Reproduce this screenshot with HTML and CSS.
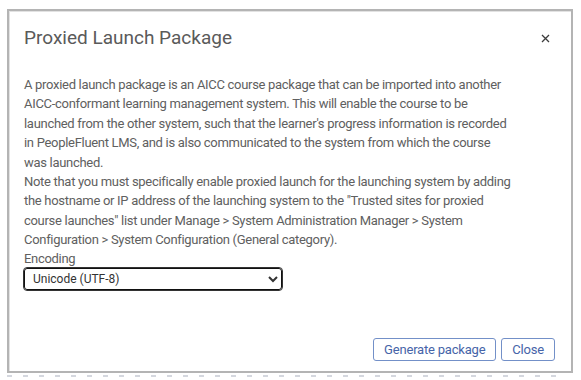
FILE: index.html
```html
<!DOCTYPE html>
<html lang="en">
<head>
    <meta charset="UTF-8">
    <meta name="viewport" content="width=device-width, initial-scale=1.0">
    <title>Proxied Launch Package</title>
    <link rel="stylesheet" href="styles.css">
</head>
<body>
    <div class="modal">
        <div class="modal-header">
            <h1>Proxied Launch Package</h1>
            <button class="close-x" aria-label="Close">
                <svg width="9" height="9" viewBox="0 0 9 9">
                    <path d="M1 1 L8 8 M8 1 L1 8" stroke="#3c3c3c" stroke-width="1.3" fill="none"/>
                </svg>
            </button>
        </div>

        <div class="modal-body">
            <p>A proxied launch package is an AICC course package that can be imported into another AICC-conformant learning management system. This will enable the course to be launched from the other system, such that the learner's progress information is recorded in PeopleFluent LMS, and is also communicated to the system from which the course was launched.</p>
            <p>Note that you must specifically enable proxied launch for the launching system by adding the hostname or IP address of the launching system to the "Trusted sites for proxied course launches" list under Manage &gt; System Administration Manager &gt; System Configuration &gt; System Configuration (General category).</p>

            <label for="encoding">Encoding</label>
            <select id="encoding">
                <option>Unicode (UTF-8)</option>
                <option>Western European (ISO-8859-1)</option>
            </select>
        </div>

        <div class="modal-footer">
            <button class="btn">Generate package</button>
            <button class="btn">Close</button>
        </div>
    </div>
    <div class="page-behind"></div>
</body>
</html>
```

FILE: styles.css
```css
/* Common styles */
body {
    margin: 0;
    padding: 9px 0 0 7px;
    background-color: #ffffff;
    font-family: Roboto, "Liberation Sans", sans-serif;
    color: #606060;
}

.modal {
    width: 562px;
    height: 360px;
    border: 2px solid #b4b4b4;
    background-color: #ffffff;
    box-shadow: inset 1px 1px 0 #e2e2e2;
    display: flex;
    flex-direction: column;
}

.modal-header {
    display: flex;
    align-items: center;
    justify-content: space-between;
    padding: 13px 21px 0 15px;
}

.modal-header h1 {
    margin: 0;
    font-size: 19px;
    font-weight: 400;
    line-height: 28px;
    color: #5a5a5a;
}

.close-x {
    background: none;
    border: none;
    padding: 0;
    display: flex;
    cursor: pointer;
}

.modal-body {
    padding: 23px 15px 0 15px;
    width: 490px;
}

.modal-body p {
    margin: 0;
    font-size: 13px;
    letter-spacing: -0.3px;
    line-height: 19.4px;
}

label {
    display: block;
    font-size: 13px;
    letter-spacing: -0.3px;
    line-height: 18px;
}

select {
    display: block;
    width: 258px;
    height: 22px;
    padding: 0 4px;
    border: 1px solid #111;
    border-radius: 3px;
    outline: 1px solid #333;
    font-family: Roboto, "Liberation Sans", sans-serif;
    font-size: 12px;
    color: #333;
    background-color: #fff;
}

.modal-footer {
    margin-top: auto;
    display: flex;
    justify-content: flex-end;
    gap: 5px;
    padding: 0 16px 10px 0;
}

.btn {
    background-color: #ffffff;
    border: 1px solid #7390c8;
    border-radius: 3px;
    color: #4664a8;
    font-family: Roboto, "Liberation Sans", sans-serif;
    font-size: 13px;
    letter-spacing: -0.2px;
    height: 23px;
    padding: 0 10px;
    cursor: pointer;
}

.page-behind {
    height: 2px;
    margin-top: 2px;
    width: 560px;
    background: repeating-linear-gradient(90deg, #d4d7de 0 5px, transparent 5px 16px);
}
```
